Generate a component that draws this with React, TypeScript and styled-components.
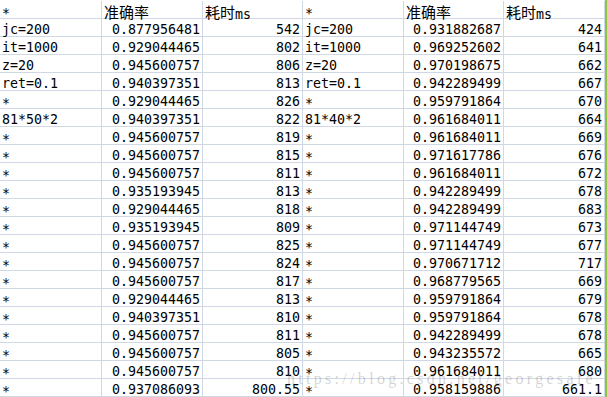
import React from "react";
import styled, { createGlobalStyle } from "styled-components";

const GlobalStyle = createGlobalStyle`
  html, body {
    margin: 0;
    padding: 0;
    background: #ffffff;
    overflow: hidden;
  }
`;

const Page = styled.div`
  display: flex;
  flex-direction: row;
  width: 607px;
  height: 397px;
  background: #ffffff;
  position: relative;
`;

const Sheet = styled.div`
  display: grid;
  grid-template-columns: 102px 101px 100px 101px 100px 101px;
  grid-auto-rows: 18px;
  padding-top: 1px;
  box-sizing: border-box;
  width: 605px;
  height: 397px;
`;

const Cell = styled.div<{ $align?: "left" | "right" }>`
  box-sizing: border-box;
  height: 18px;
  border-right: 1px solid #d0d7e5;
  border-bottom: 1px solid #d0d7e5;
  padding: 5px ${(p) => (p.$align === "right" ? "2px" : "0")} 0
    ${(p) => (p.$align === "right" ? "0" : "2px")};
  text-align: ${(p) => p.$align ?? "left"};
  white-space: nowrap;
  font-family: "DejaVu Sans Mono", "Noto Sans CJK SC", monospace;
  font-size: 13.3px;
  line-height: 12px;
  color: #000000;
`;

const Han = styled.span`
  font-family: "Noto Sans CJK SC", sans-serif;
  font-size: 15px;
  vertical-align: 1px;
`;

const Star = styled.span`
  vertical-align: -2px;
`;

const Edge = styled.div`
  width: 2px;
  height: 397px;
  background: #8cc63e;
`;

const Watermark = styled.div`
  position: absolute;
  left: 287px;
  top: 371px;
  font-family: "Liberation Serif", "Times New Roman", serif;
  font-size: 16px;
  line-height: 16px;
  letter-spacing: 3.3px;
  color: rgba(120, 120, 120, 0.32);
  white-space: nowrap;
  pointer-events: none;
`;

type Row = [string, string, string, string, string, string];

const rows: Row[] = [
  ["jc=200", "0.877956481", "542", "jc=200", "0.931882687", "424"],
  ["it=1000", "0.929044465", "802", "it=1000", "0.969252602", "641"],
  ["z=20", "0.945600757", "806", "z=20", "0.970198675", "662"],
  ["ret=0.1", "0.940397351", "813", "ret=0.1", "0.942289499", "667"],
  ["*", "0.929044465", "826", "*", "0.959791864", "670"],
  ["81*50*2", "0.940397351", "822", "81*40*2", "0.961684011", "664"],
  ["*", "0.945600757", "819", "*", "0.961684011", "669"],
  ["*", "0.945600757", "815", "*", "0.971617786", "676"],
  ["*", "0.945600757", "811", "*", "0.961684011", "672"],
  ["*", "0.935193945", "813", "*", "0.942289499", "678"],
  ["*", "0.929044465", "818", "*", "0.942289499", "683"],
  ["*", "0.935193945", "809", "*", "0.971144749", "673"],
  ["*", "0.945600757", "825", "*", "0.971144749", "677"],
  ["*", "0.945600757", "824", "*", "0.970671712", "717"],
  ["*", "0.945600757", "817", "*", "0.968779565", "669"],
  ["*", "0.929044465", "813", "*", "0.959791864", "679"],
  ["*", "0.940397351", "810", "*", "0.959791864", "678"],
  ["*", "0.945600757", "811", "*", "0.942289499", "678"],
  ["*", "0.945600757", "805", "*", "0.943235572", "665"],
  ["*", "0.945600757", "810", "*", "0.961684011", "680"],
  ["*", "0.937086093", "800.55", "*", "0.958159886", "661.1"],
];

const Label: React.FC<{ text: string }> = ({ text }) => (
  <Cell>{text === "*" ? <Star>*</Star> : text}</Cell>
);

const Header: React.FC = () => (
  <>
    <Label text="*" />
    <Cell>
      <Han>准确率</Han>
    </Cell>
    <Cell>
      <Han>耗时</Han>ms
    </Cell>
    <Label text="*" />
    <Cell>
      <Han>准确率</Han>
    </Cell>
    <Cell>
      <Han>耗时</Han>ms
    </Cell>
  </>
);

export default function App() {
  return (
    <Page>
      <GlobalStyle />
      <Sheet>
        <Header />
        {rows.map((r, i) => (
          <React.Fragment key={i}>
            <Label text={r[0]} />
            <Cell $align="right">{r[1]}</Cell>
            <Cell $align="right">{r[2]}</Cell>
            <Label text={r[3]} />
            <Cell $align="right">{r[4]}</Cell>
            <Cell $align="right">{r[5]}</Cell>
          </React.Fragment>
        ))}
      </Sheet>
      <Edge />
      <Watermark>https://blog.csdn.net/georgesafe</Watermark>
    </Page>
  );
}
